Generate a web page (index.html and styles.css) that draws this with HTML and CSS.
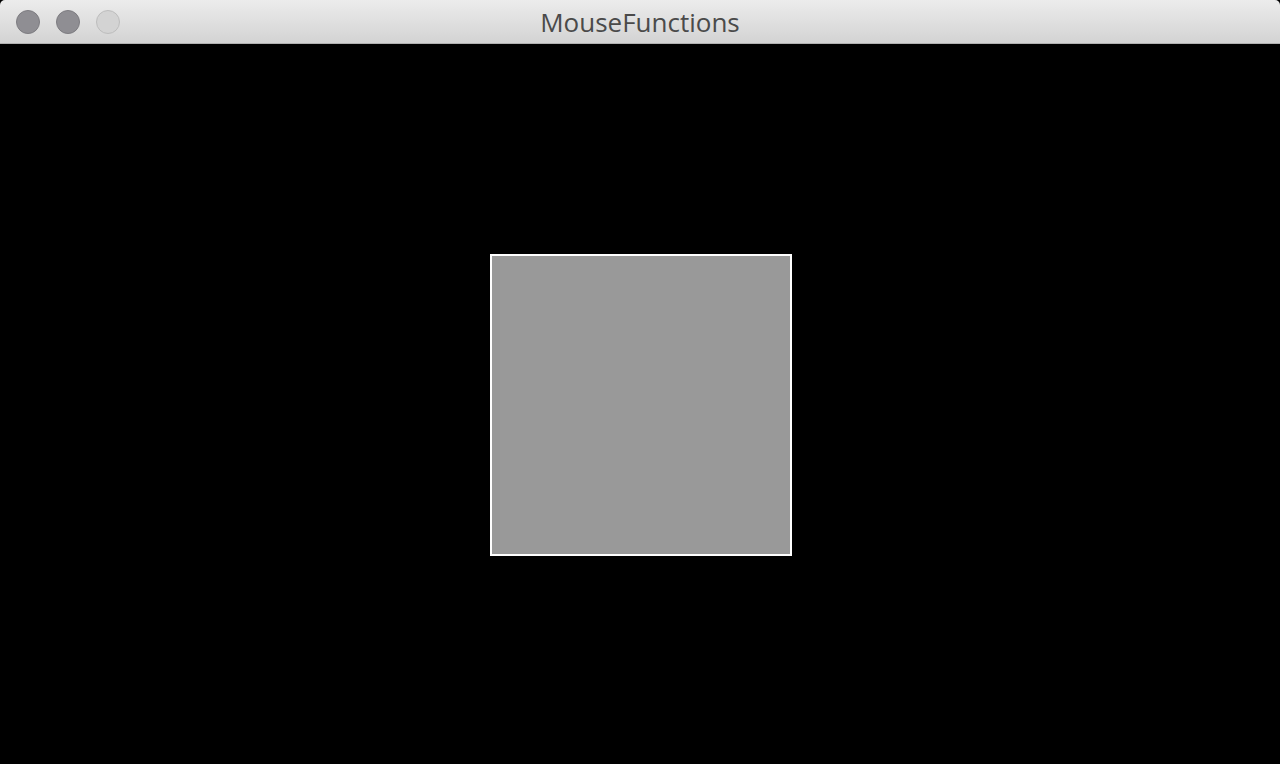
FILE: index.html
```html
<!DOCTYPE html>
<html>
<head>
<meta charset="utf-8">
<link rel="stylesheet" href="styles.css">
</head>
<body>
<div class="window">
  <div class="titlebar">
    <div class="lights">
      <span class="light"></span>
      <span class="light"></span>
      <span class="light off"></span>
    </div>
    <div class="title">MouseFunctions</div>
  </div>
  <div class="canvas">
    <div class="square"></div>
  </div>
</div>
</body>
</html>
```
FILE: styles.css
```css
html, body {
  margin: 0;
  padding: 0;
  background: #000;
  width: 1280px;
  height: 764px;
  overflow: hidden;
}
.window {
  display: flex;
  flex-direction: column;
  width: 1280px;
  height: 764px;
}
.titlebar {
  position: relative;
  height: 43px;
  flex: none;
  background: linear-gradient(#ececec, #d3d3d3);
  border-bottom: 1px solid #b1b1b1;
  border-radius: 5px 5px 0 0;
  display: flex;
  align-items: center;
  justify-content: center;
}
.lights {
  position: absolute;
  left: 16px;
  top: 10px;
  display: flex;
  gap: 16px;
}
.light {
  width: 22px;
  height: 22px;
  border-radius: 50%;
  background: #8f8e93;
  border: 1px solid #7d7c81;
}
.light.off {
  background: #d3d3d3;
  border-color: #bdbdbd;
}
.title {
  font-family: "Open Sans", "Liberation Sans", sans-serif;
  font-size: 26px;
  color: #4a4a4a;
  margin-top: 0;
}
.canvas {
  flex: 1;
  background: #000;
  display: flex;
  align-items: center;
  justify-content: center;
  padding-left: 2px;
  padding-top: 2px;
}
.square {
  width: 298px;
  height: 298px;
  background: #999999;
  border: 2px solid #ffffff;
}
```
